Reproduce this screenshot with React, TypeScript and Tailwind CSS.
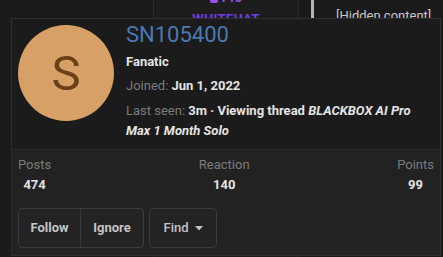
const stats = [
  { label: 'Posts', value: '474' },
  { label: 'Reaction', value: '140' },
  { label: 'Points', value: '99' },
];

const btnCls = 'h-full flex items-center px-[12px] text-[13px] font-bold text-[#c4c4c4]';

export default function App() {
  return (
    <div
      className="relative w-[443px] h-[257px] overflow-hidden bg-[#1a1a1a]"
      style={{ fontFamily: 'Roboto, "Noto Sans", sans-serif' }}
    >
      {/* Page behind the tooltip */}
      <div className="flex h-full">
        <div className="w-[154px] border-r border-[#2a2a2a] bg-[#1b1b1b]" />
        <div className="w-[145px] border-r border-[#2b2b2b] bg-[#1d1d1d] flex flex-col items-center">
          <div className="-mt-[9px] flex items-center gap-1 text-[13px] font-bold text-[#9a4fe8] leading-[14px]">
            <span className="inline-block w-[8px] h-[9px] bg-[#9a4fe8] rounded-[2px]" />
            Pro
          </div>
          <div className="mt-[6px] text-[13px] font-bold text-[#6d3fe0] tracking-wide leading-[16px]">WHITEHAT</div>
        </div>
        <div className="w-[12px]" />
        <div className="w-[3px] h-[20px] bg-[#b5b5b5]" />
        <div className="flex-1 pl-[22px] pt-[8px]">
          <div className="text-[13px] text-[#c8c8c8] whitespace-nowrap leading-[16px]">[Hidden content]</div>
        </div>
      </div>

      {/* Member tooltip */}
      <div className="absolute left-[11px] top-[18px] w-[430px] h-[238px] border border-[#2e2e2e] bg-[#1b1b1b] flex flex-col">
        <div className="flex p-[6px] pb-[8px] gap-[12px]">
          <div className="w-[96px] h-[96px] shrink-0 rounded-full bg-[#d7a067] flex items-center justify-center text-[49px] text-[#6a4118] leading-none">
            S
          </div>
          <div className="flex flex-col text-[13px] leading-[20px]">
            <div className="text-[22px] leading-[20px] text-[#4a79b3]">SN105400</div>
            <div className="mt-[7px] font-bold text-[#e4e4e4]">Fanatic</div>
            <div className="mt-1">
              <span className="text-[#7a7a7a]">Joined: </span>
              <span className="font-bold text-[#e4e4e4]">Jun 1, 2022</span>
            </div>
            <div className="mt-[5px] pr-[20px]">
              <span className="text-[#7a7a7a]">Last seen: </span>
              <span className="font-bold text-[#e4e4e4]">
                3m · Viewing thread <em>BLACKBOX AI Pro Max 1 Month Solo</em>
              </span>
            </div>
          </div>
        </div>

        <div className="flex-1 border-t border-[#2a2a2a] bg-[#222222] px-[6px] pt-[5px]">
          <div className="flex justify-between text-[13px] leading-[20px]">
            {stats.map((s) => (
              <div key={s.label} className="text-center">
                <div className="text-[#7a7a7a]">{s.label}</div>
                <div className="font-bold text-[#e2e2e2]">{s.value}</div>
              </div>
            ))}
          </div>
          <div className="mt-[13px] flex gap-[5px] h-[40px]">
            <div className="flex border border-[#3b3b3b] rounded-[4px] bg-[#232323]">
              <div className={btnCls + ' w-[62px] justify-center border-r border-[#3b3b3b]'}>Follow</div>
              <div className={btnCls + ' w-[62px] justify-center'}>Ignore</div>
            </div>
            <div className="flex items-center gap-[6px] w-[68px] justify-center border border-[#3b3b3b] rounded-[4px] bg-[#232323] text-[13px] font-medium text-[#c4c4c4]">
              Find
              <svg width="8" height="5" viewBox="0 0 8 5" className="mt-[1px]">
                <path d="M0 0h8L4 4.5z" fill="#c4c4c4" />
              </svg>
            </div>
          </div>
        </div>
      </div>
    </div>
  );
}
